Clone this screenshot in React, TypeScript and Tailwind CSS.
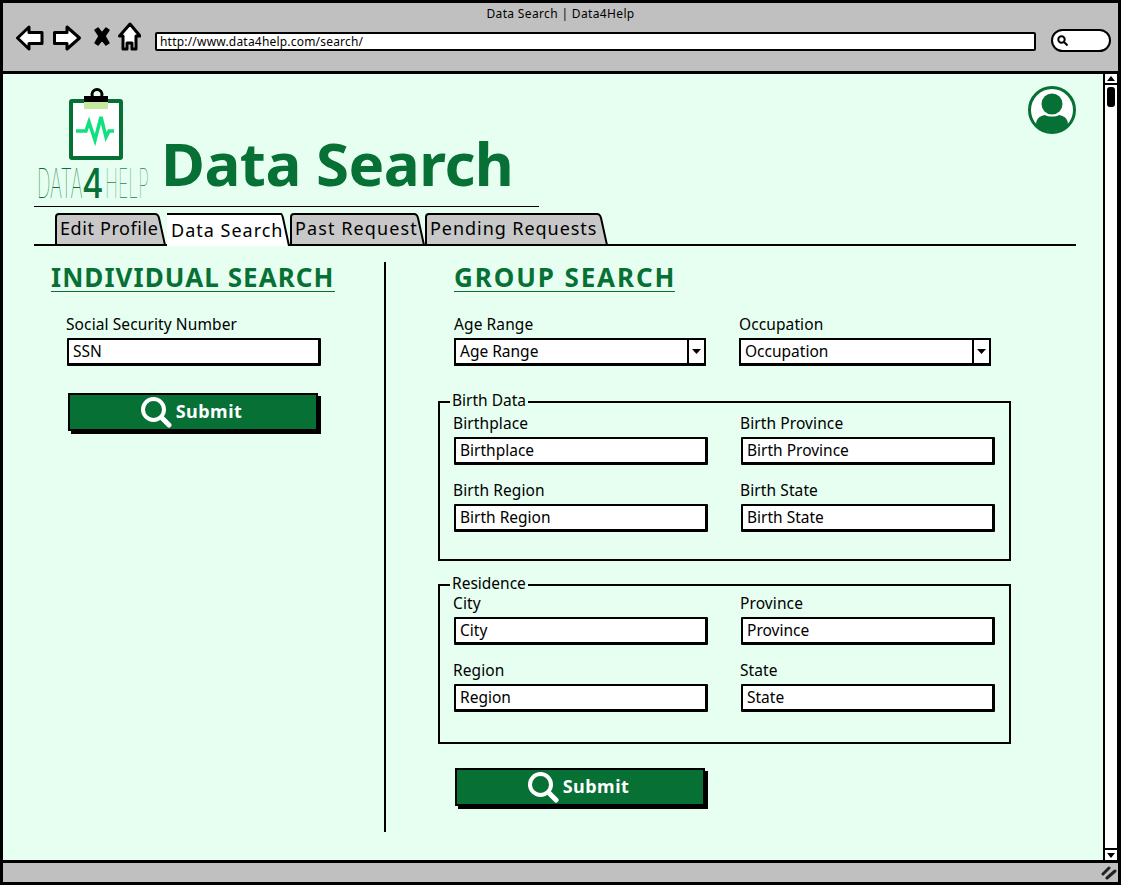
// App.tsx - Data4Help data search wireframe
import React from 'react';

const GREEN = '#067035';

const Label: React.FC<{ text: string }> = ({ text }) => (
  <div className="h-[20px] text-[15.5px] leading-[20px] tracking-[0.1px] text-black">{text}</div>
);

const Field: React.FC<{ label: string; placeholder?: string }> = ({ label, placeholder }) => (
  <div>
    <Label text={label} />
    <div className="mt-[4px] ml-[1px] flex h-[28px] w-[254px] items-center rounded-[1px] border-2 border-b-[3px] border-r-[3px] border-black bg-white pl-[4px] text-[15.5px] text-black">
      {placeholder || label}
    </div>
  </div>
);

const Select: React.FC<{ label: string }> = ({ label }) => (
  <div className="w-[252px]">
    <Label text={label} />
    <div className="mt-[4px] flex h-[28px] items-center border-2 border-b-[3px] border-black bg-white text-[15.5px] text-black">
      <span className="flex-1 pl-[4px]">{label}</span>
      <span className="flex h-full w-[17px] items-center justify-center border-l-2 border-black">
        <svg width="9" height="5" viewBox="0 0 9 5">
          <path d="M0 0h9L4.5 5z" fill="#000" />
        </svg>
      </span>
    </div>
  </div>
);

const SearchGlyph = () => (
  <svg width="32" height="32" viewBox="0 0 32 32" fill="none" stroke="#fff" strokeLinecap="round">
    <circle cx="13.5" cy="13.5" r="10.5" strokeWidth="4" />
    <path d="M21.5 21.5L29 29" strokeWidth="5" />
  </svg>
);

const SubmitButton: React.FC = () => (
  <div className="flex h-[38px] w-[250px] items-center justify-center gap-[4px] border-2 border-black bg-[#067035] pr-[4px] pb-[1px] text-[18px] font-bold tracking-[0.5px] text-white shadow-[3px_3px_0_#000]">
    <SearchGlyph />
    <span>Submit</span>
  </div>
);

const SectionTitle: React.FC<{ text: string; className: string }> = ({ text, className }) => (
  <div
    className={`border-b border-[#067035] text-[26px] leading-[27px] font-bold whitespace-nowrap text-[#067035] ${className}`}
  >
    {text}
  </div>
);

const tabs = [
  { text: 'Edit Profile', width: 111, box: 'w-[111px] tracking-[0.6px]' },
  { text: 'Data Search', width: 124, box: 'w-[124px] tracking-[1px]', active: true },
  { text: 'Past Request', width: 135, box: 'w-[135px] tracking-[1.1px]' },
  { text: 'Pending Requests', width: 183, box: 'w-[183px] tracking-[0.95px]' },
];

const Tab: React.FC<{ text: string; width: number; box: string; active?: boolean }> = ({
  text,
  width,
  box,
  active,
}) => (
  <div className={`relative h-[33px] ${box}`}>
    <svg className="absolute inset-0" width={width} height="33" viewBox={`0 0 ${width} 33`}>
      {active ? (
        <>
          <path d={`M1 33V1H${width - 9}Q${width - 8} 1 ${width - 7} 5L${width - 1} 33Z`} fill="#fff" />
          <path d={`M1 1H${width - 9}Q${width - 8} 1 ${width - 7} 5L${width - 1} 33`} fill="none" stroke="#000" strokeWidth="2" />
        </>
      ) : (
        <path
          d={`M1 32V4Q1 1 4 1H${width - 11}Q${width - 8} 1 ${width - 7} 5L${width - 1} 32Z`}
          fill="#c8c8c8"
          stroke="#000"
          strokeWidth="2"
        />
      )}
    </svg>
    <span
      className={`absolute left-[5px] text-[18px] leading-[24px] text-black ${
        active ? 'top-[5px]' : 'top-[3px]'
      }`}
    >
      {text}
    </span>
  </div>
);

const Logo = () => (
  <svg width="116" height="112" viewBox="0 0 116 112" className="shrink-0 overflow-visible">
    <rect x="37" y="13" width="50" height="57" fill="#fff" stroke={GREEN} strokeWidth="4" rx="1" />
    <circle cx="63" cy="6.5" r="5" fill="none" stroke="#000" strokeWidth="3" />
    <rect x="50" y="8" width="24" height="6" fill="#000" />
    <rect x="50" y="14" width="24" height="7" fill="#c5e89f" />
    <path
      d="M42 43H52L55 34L61 52L67 29L72 49L75 43H80"
      fill="none"
      stroke="#12e07f"
      strokeWidth="3.5"
    />
    <g fontFamily="Inter, sans-serif" fontSize="41">
      <text transform="translate(3 110) scale(0.46 1)" fontWeight="100" fill={GREEN}>
        DATA
      </text>
      <text transform="translate(48 110) scale(0.8 1)" fontWeight="500" fill={GREEN}>
        4
      </text>
      <text transform="translate(71 110) scale(0.43 1)" fontWeight="100" fill="#4b9a6c">
        HELP
      </text>
    </g>
  </svg>
);

const Avatar = () => (
  <svg width="48" height="48" viewBox="0 0 48 48">
    <circle cx="24" cy="24" r="22.5" fill="#fff" stroke={GREEN} strokeWidth="3" />
    <circle cx="24" cy="18" r="10.5" fill={GREEN} />
    <path d="M8 39C8 33 11 30 17 29C20 31 28 31 31 29C37 30 40 33 40 39C32 47 16 47 8 39Z" fill={GREEN} />
  </svg>
);

const NavIcons = () => (
  <svg width="125" height="30" viewBox="0 0 125 30" fill="#fff" stroke="#000" strokeWidth="3" strokeLinejoin="round">
    <path d="M1.5 16L13 5V10.5H26V21.5H13V27Z" />
    <path d="M38.5 10.5H51V5L63.5 16L51 27V21.5H38.5Z" />
    <path d="M79 8L82 6L86 11L90 6L93 8L89 14L93 21L90 23L86 18L82 23L79 21L83 14Z" fill="#000" strokeWidth="1.5" />
    <path d="M103.5 14L114 2L124 14H120V27H116V21H111V27H107V14Z" />
  </svg>
);

const FieldGroup: React.FC<{ legend: string; names: string[]; inner: string }> = ({ legend, names, inner }) => (
  <fieldset className="h-[168px] w-[573px] border-2 border-black">
    <legend className="ml-[10px] px-[2px] pb-[4px] text-[15.5px] leading-[14px] text-black">{legend}</legend>
    <div className={`grid grid-cols-[287px_254px] gap-y-[15px] pl-[13px] ${inner}`}>
      {names.map((name) => (
        <Field key={name} label={name} />
      ))}
    </div>
  </fieldset>
);

const App: React.FC = () => {
  return (
    <div className="h-[887px] w-[1123px] overflow-hidden bg-white font-['Noto_Sans',sans-serif]">
      <div className="flex h-[885px] w-[1121px] flex-col border-[3px] border-black bg-[#e6fff0]">
        {/* browser chrome */}
        <div className="h-[71px] shrink-0 border-b-[3px] border-black bg-[#c0c0c0]">
          <div className="h-[19px] pt-[2px] text-center text-[12px] leading-[17px] tracking-[0.35px] text-black">
            Data Search | Data4Help
          </div>
          <div className="flex items-start pl-[13px]">
            <NavIcons />
            <div className="mt-[10px] ml-[14px] flex h-[19px] w-[881px] items-center rounded-[2px] border-2 border-black bg-white pl-[3px] text-[12px] tracking-[0.2px] text-black">
              http://www.data4help.com/search/
            </div>
            <div className="mt-[7px] ml-[15px] flex h-[23px] w-[60px] items-center rounded-full border-2 border-black bg-white pl-[4px]">
              <svg width="11" height="11" viewBox="0 0 11 11" fill="none" stroke="#000">
                <circle cx="4.5" cy="4.5" r="3.2" strokeWidth="2" />
                <path d="M7 7l3.5 3.5" strokeWidth="2" />
              </svg>
            </div>
          </div>
        </div>

        <div className="flex min-h-0 flex-1">
          <main className="min-w-0 flex-1">
            <div className="flex items-start">
              <div className="ml-[31px] w-[505px] border-b border-black pt-[14px] pb-[6px]">
                <div className="flex items-end">
                  <Logo />
                  <div className="mb-[2px] ml-[11px] text-[60px] leading-[70px] font-bold tracking-[-0.5px] whitespace-nowrap text-[#067035]">
                    Data Search
                  </div>
                </div>
              </div>
              <div className="mt-[12px] ml-[489px]">
                <Avatar />
              </div>
            </div>

            <div className="mt-[6px] ml-[31px] flex h-[33px] w-[1042px] items-start border-b-2 border-black pl-[21px]">
              {tabs.map((t) => (
                <Tab key={t.text} {...t} />
              ))}
            </div>

            <div className="flex">
              <section className="w-[381px] pt-[18px] pl-[48px]">
                <SectionTitle text="INDIVIDUAL SEARCH" className="w-[284px] tracking-[1.05px]" />
                <div className="mt-[22px] ml-[15px]">
                  <Field label="Social Security Number" placeholder="SSN" />
                </div>
                <div className="mt-[27px] ml-[17px]">
                  <SubmitButton />
                </div>
              </section>

              <div className="mt-[16px] h-[570px] w-[2px] bg-black" />

              <section className="pt-[18px] pl-[52px]">
                <div className="ml-[16px]">
                  <SectionTitle text="GROUP SEARCH" className="w-[221px] tracking-[1.9px]" />
                  <div className="mt-[22px] flex gap-[33px]">
                    <Select label="Age Range" />
                    <Select label="Occupation" />
                  </div>
                </div>
                <div className="mt-[27px]">
                  <FieldGroup
                    legend="Birth Data"
                    inner="pt-[2px]"
                    names={['Birthplace', 'Birth Province', 'Birth Region', 'Birth State']}
                  />
                </div>
                <div className="mt-[15px]">
                  <FieldGroup
                    legend="Residence"
                    inner="-mt-[1px]"
                    names={['City', 'Province', 'Region', 'State']}
                  />
                </div>
                <div className="mt-[24px] ml-[17px]">
                  <SubmitButton />
                </div>
              </section>
            </div>
          </main>

          {/* scrollbar */}
          <div className="flex w-[15px] shrink-0 flex-col items-center border-r border-l-2 border-black bg-white">
            <div className="flex h-[11px] w-full items-center justify-center border-b-2 border-black">
              <svg width="8" height="5" viewBox="0 0 8 5">
                <path d="M0 5L4 0l4 5z" fill="#000" />
              </svg>
            </div>
            <div className="mt-[2px] h-[20px] w-[8px] rounded-[3px] bg-black" />
            <div className="mt-auto flex h-[12px] w-full items-center justify-center border-t-2 border-black">
              <svg width="8" height="5" viewBox="0 0 8 5">
                <path d="M0 0h8L4 5z" fill="#000" />
              </svg>
            </div>
          </div>
        </div>

        {/* status bar */}
        <div className="flex h-[22px] shrink-0 items-center justify-end border-t-[3px] border-black bg-[#c0c0c0] pr-[1px]">
          <svg width="16" height="14" viewBox="0 0 16 14" fill="none" stroke="#222" strokeWidth="3" strokeLinecap="round">
            <path d="M2 8L8 2M6 12L14 5" />
          </svg>
        </div>
      </div>
    </div>
  );
};

export default App;
